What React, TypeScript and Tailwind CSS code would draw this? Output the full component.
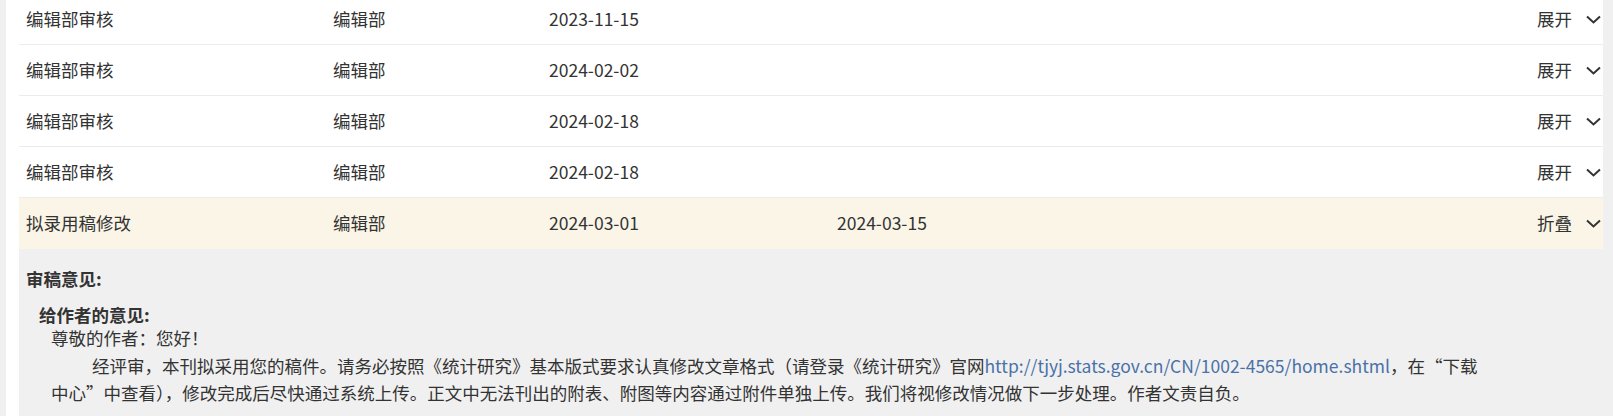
import React from 'react';

interface FlowRow {
  step: string;
  dept: string;
  start: string;
  end?: string;
  open?: boolean;
}

const rows: FlowRow[] = [
  { step: '编辑部审核', dept: '编辑部', start: '2023-11-15' },
  { step: '编辑部审核', dept: '编辑部', start: '2024-02-02' },
  { step: '编辑部审核', dept: '编辑部', start: '2024-02-18' },
  { step: '编辑部审核', dept: '编辑部', start: '2024-02-18' },
  { step: '拟录用稿修改', dept: '编辑部', start: '2024-03-01', end: '2024-03-15', open: true },
];

function Chevron() {
  return (
    <svg width="15" height="9" viewBox="0 0 15 9" fill="none" className="shrink-0">
      <path d="M1 1.5 L7.5 7.5 L14 1.5" stroke="#333" strokeWidth="2" />
    </svg>
  );
}

function ReviewDetail() {
  return (
    <div className="bg-[#f0f0f0] pl-[7px] pt-[16px] pb-[20px]">
      <h4 className="font-bold leading-[28px]">审稿意见:</h4>
      <div className="ml-[13px] mt-[13px]">
        <h5 className="font-bold leading-[18px]">给作者的意见:</h5>
        <div className="ml-[12px] leading-[27.5px]">
          <p>尊敬的作者：您好！</p>
          <p className="indent-[41px] whitespace-nowrap">
            经评审，本刊拟采用您的稿件。请务必按照《统计研究》基本版式要求认真修改文章格式（请登录《统计研究》官网
            <a className="text-[#4a72a8]" href="#">http://tjyj.stats.gov.cn/CN/1002-4565/home.shtml</a>
            ，在“下载
            <br />
            中心”中查看），修改完成后尽快通过系统上传。正文中无法刊出的附表、附图等内容通过附件单独上传。我们将视修改情况做下一步处理。作者文责自负。
          </p>
        </div>
      </div>
    </div>
  );
}

export default function App() {
  return (
    <div
      className="h-[416px] w-full overflow-hidden bg-[#f0f0f0] text-[17.5px] text-[#333]"
      style={{ fontFamily: '"Microsoft YaHei", "Noto Sans CJK SC", sans-serif' }}
    >
      <div className="ml-[6px] w-[1597px] bg-white pl-[13px] -mt-[6px]">
        {rows.map((row, i) => (
          <div key={i}>
            <div
              className={
                row.open
                  ? 'flex h-[51px] items-center bg-[#faf5e6] pl-[7px] pr-[2px]'
                  : 'flex h-[51px] items-center border-b border-[#ececec] pl-[7px] pr-[2px]'
              }
            >
              <div className="w-[307px]">{row.step}</div>
              <div className="w-[216px]">{row.dept}</div>
              <div className="w-[288px]">{row.start}</div>
              <div className="flex-1">{row.end}</div>
              <div className="flex items-center gap-[14px]">
                <span>{row.open ? '折叠' : '展开'}</span>
                <Chevron />
              </div>
            </div>
            {row.open && <ReviewDetail />}
          </div>
        ))}
      </div>
    </div>
  );
}
